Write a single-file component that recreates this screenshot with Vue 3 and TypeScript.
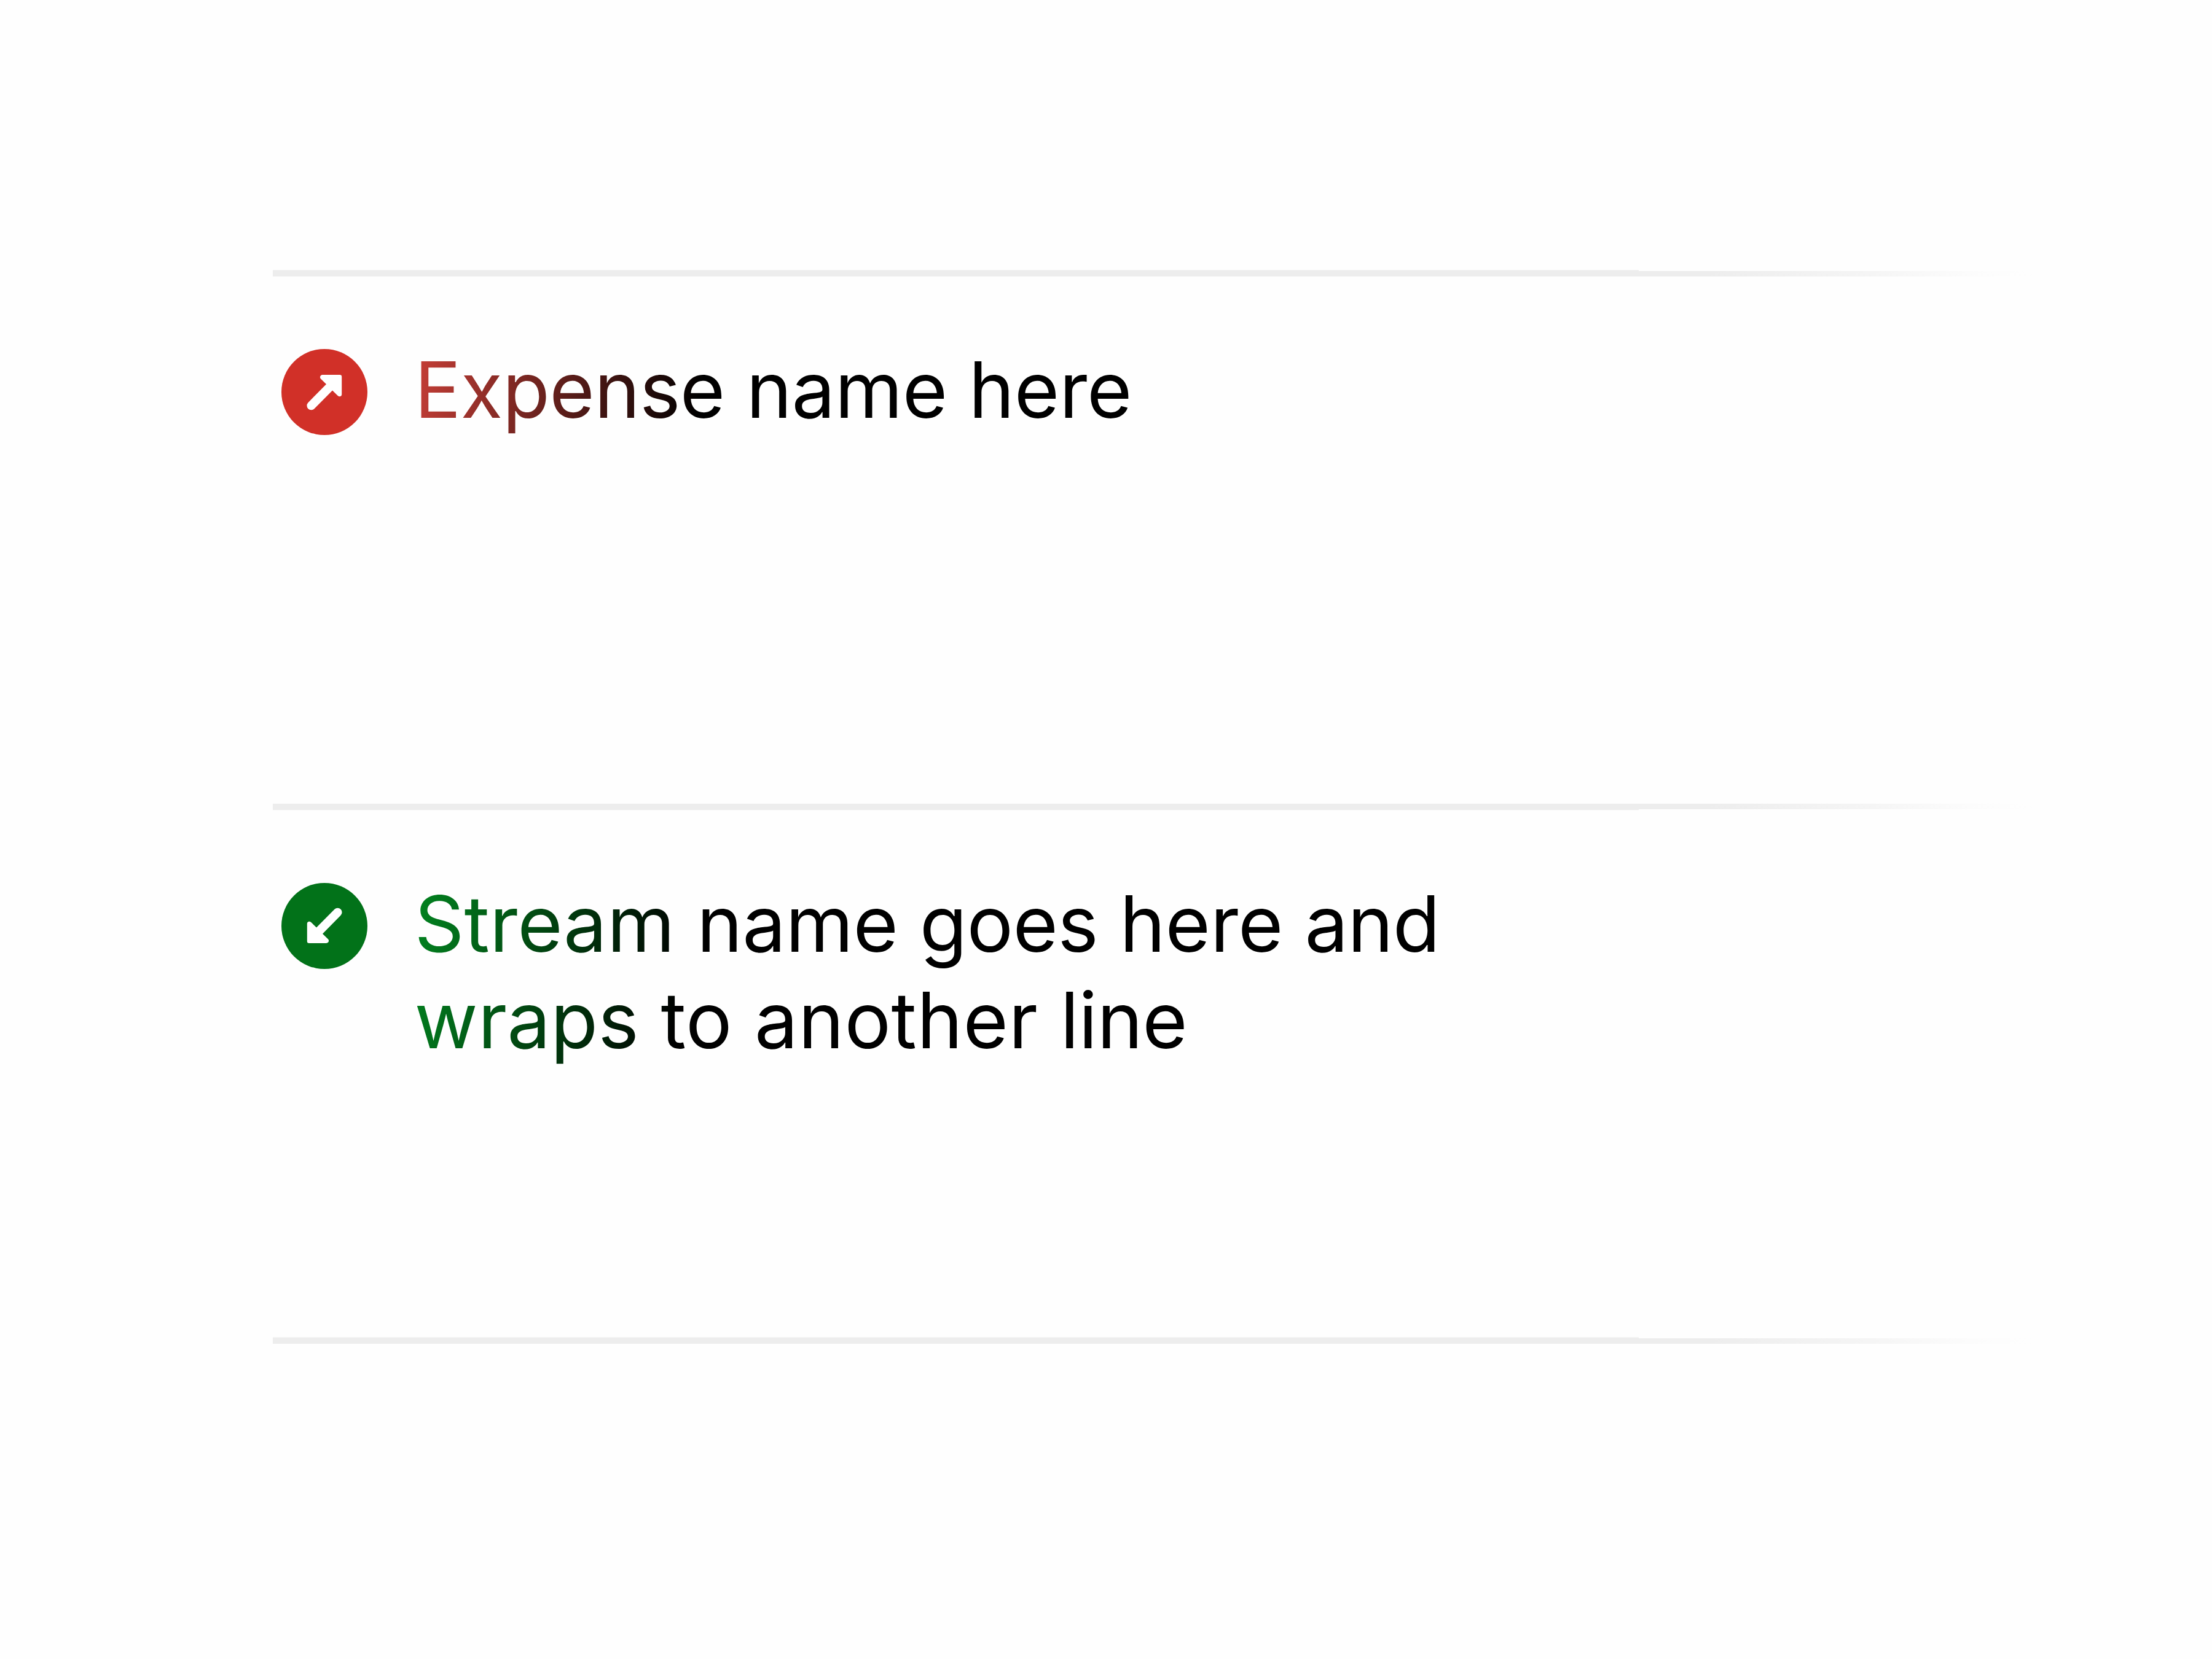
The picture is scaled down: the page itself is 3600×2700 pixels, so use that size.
<script setup lang="ts">
type Word = [text: string, tracking: number]
interface Row { kind: 'expense' | 'income'; words: Word[] }

const rows: Row[] = [
  { kind: 'expense', words: [['Expense', -0.62], ['name', -0.48], ['here', -0.27]] },
  {
    kind: 'income',
    words: [
      ['Stream', 0.13], ['name', -0.36], ['goes', -0.56], ['here', -0.2], ['and', -0.95],
      ['wraps', 0.1], ['to', 0.5], ['another', 0.6], ['line', -0.6],
    ],
  },
]
</script>

<template>
  <main class="page">
    <ul class="list">
      <li v-for="row in rows" :key="row.kind" class="row" :class="row.kind">
        <div class="rule"><span class="solid"></span><span class="fade"></span></div>
        <div class="content">
          <svg class="icon" viewBox="0 0 140 140">
            <circle cx="70" cy="70" r="70" fill="currentColor" />
            <g :transform="row.kind === 'income' ? 'rotate(180 70 70)' : undefined" fill="#fff">
              <path d="M67 42H95Q98.200 42 98.200 45.200V74C98.200 77 94.500 78.500 92 76.300L83 67.500L53.500 97.200A7 7 0 0 1 43.500 87.200L73 57.300L64 48.500C61.500 46 63.500 42 67 42Z" />
            </g>
          </svg>
          <span class="name"><span v-for="([text, tracking], i) in row.words" :key="i" :style="{ letterSpacing: tracking + 'px' }">{{ text + ' ' }}</span></span>
        </div>
      </li>
    </ul>
    <div class="rule"><span class="solid"></span><span class="fade"></span></div>
  </main>
</template>

<style>
body { margin: 0; background: #fefefe; }
</style>

<style scoped>
.page { box-sizing: border-box; width: 3600px; height: 2700px; padding: 439px 288px 0 444px; background: #fefefe; }
.list { margin: 0; padding: 0; list-style: none; }
.row { height: 869px; }
.row + .row { height: 868px; }
.rule { display: flex; align-items: flex-end; height: 11px; }
.solid { box-sizing: border-box; width: 2223px; height: 11px; background: #ededed; border-top: 1px solid #f5f5f5; }
.fade { flex: 1; height: 9px; background: linear-gradient(90deg, #ededed 18%, #f5f5f5 59%, #fcfcfc 84%, #fefefe 100%); }
.income .rule { align-items: flex-start; }
.income .solid { border-top: 0; border-bottom: 1px solid #f8f8f8; }
.content { display: flex; align-items: flex-start; padding: 117.5px 0 0 13.5px; }
.icon { flex: none; width: 140px; height: 140px; }
.expense { color: #d13028; }
.income { color: #027219; }
.name {
  width: 1740px;
  margin: -11.500px 0 0 77px;
  font: 400 126px/156.500px Inter, sans-serif;
  color: transparent;
  background: linear-gradient(100deg, #c83f37 0, #000 472px);
  background-clip: text;
  -webkit-background-clip: text;
}
.income .name { background-image: linear-gradient(100deg, #028520 0, #000 460px); }
</style>
